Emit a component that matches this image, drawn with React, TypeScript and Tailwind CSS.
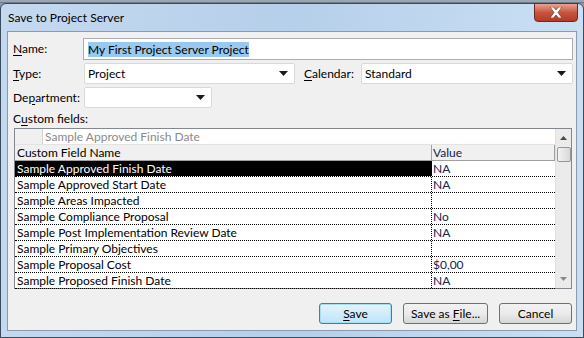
import React from "react";

const rows: { name: string; value: string }[] = [
  { name: "Sample Approved Finish Date", value: "NA" },
  { name: "Sample Approved Start Date", value: "NA" },
  { name: "Sample Areas Impacted", value: "" },
  { name: "Sample Compliance Proposal", value: "No" },
  { name: "Sample Post Implementation Review Date", value: "NA" },
  { name: "Sample Primary Objectives", value: "" },
  { name: "Sample Proposal Cost", value: "$0,00" },
  { name: "Sample Proposed Finish Date", value: "NA" },
];

function Arrow() {
  return (
    <svg width="9" height="5" viewBox="0 0 9 5" className="shrink-0">
      <path d="M0 0 H9 L4.5 5 Z" fill="#1a1a1a" />
    </svg>
  );
}

function Combo({ w, text }: { w: string; text?: string }) {
  return (
    <div
      className={`${w} h-[21px] flex items-center bg-white border border-[#d9d9d9] rounded-[2px] pl-[3px] pr-[6px]`}
    >
      <span className="flex-1 leading-none">{text}</span>
      <Arrow />
    </div>
  );
}

export default function App() {
  return (
    <div className="w-[584px] h-[338px] overflow-hidden bg-[#8c98a6] flex flex-col font-['Lato','Noto_Sans',sans-serif] text-[12px] text-black">
      <div className="h-[3px] bg-[#9aa5b2] border-b border-[#707c8a]" />
      <div className="relative flex-1 flex flex-col border border-[#3b4b5e] rounded-t-[6px] bg-gradient-to-r from-[#c4d9f0] via-[#b6cfea] to-[#c9dff4]">
        <div className="h-[27px] flex items-center pl-[7px] text-[12px] text-black">
          Save to Project Server
        </div>
        <div className="absolute right-[5px] top-[-1px] w-[44px] h-[19px] rounded-b-[4px] border border-[#6b2a22] bg-gradient-to-b from-[#e5a394] via-[#c9543d] to-[#b53a26] flex items-center justify-center">
          <svg width="14" height="11" viewBox="0 0 14 11">
            <path
              d="M1 0 H4.5 L7 3 L9.5 0 H13 L9 5.5 L13 11 H9.5 L7 8 L4.5 11 H1 L5 5.5 Z"
              fill="#ffffff"
              stroke="#5b2a24"
              strokeWidth="0.6"
            />
          </svg>
        </div>
        <div className="mx-[6px] h-[300px] border border-[#8a9bb0] bg-[#f0f0f0] flex flex-col pl-[5px] pr-[3px] pt-[6px]">
          {/* Name */}
          <div className="flex items-center h-[22px]">
            <div className="w-[70px]">
              <span className="underline underline-offset-2">N</span>ame:
            </div>
            <div className="flex-1 h-[22px] bg-white border border-[#abadb3] flex items-center pl-[4px]">
              <span className="bg-[#99c9ef] leading-[15px]">My First Project Server Project</span>
            </div>
          </div>
          {/* Type / Calendar */}
          <div className="flex items-center h-[21px] mt-[3px]">
            <div className="w-[71px]">
              <span className="underline underline-offset-2">T</span>ype:
            </div>
            <Combo w="w-[211px]" text="Project" />
            <div className="w-[57px] ml-[9px]">
              <span className="underline underline-offset-2">C</span>alendar:
            </div>
            <Combo w="flex-1" text="Standard" />
          </div>
          {/* Department */}
          <div className="flex items-center h-[21px] mt-[3px]">
            <div className="w-[71px]">
              De<span className="underline underline-offset-2">p</span>artment:
            </div>
            <Combo w="w-[128px]" />
          </div>
          {/* Custom fields */}
          <div className="h-[14px] mt-[4px] flex items-center">
            C<span className="underline underline-offset-2">u</span>stom fields:
          </div>
          {/* Grid */}
          <div className="mt-[2px] ml-[1px] mr-[1px] h-[161px] flex border border-[#828790] bg-white">
            <div className="flex-1 flex flex-col">
              <div className="h-[16px] flex border-b border-[#e3e3e3]">
                <div className="w-[28px] bg-[#f0f0f0] border-r border-[#d5d5d5]" />
                <div className="pl-[2px] text-[#8a8a8a] flex items-center">Sample Approved Finish Date</div>
              </div>
              <div className="h-[16px] flex bg-[#f0f0f0] border-b border-[#a0a0a0] border-r">
                <div className="w-[417px] pl-[2px] border-r border-[#a0a0a0] flex items-center">Custom Field Name</div>
                <div className="flex-1 pl-[1px] flex items-center text-[#14214f]">Value</div>
              </div>
              {rows.map((r, i) => (
                <div key={r.name} className="h-[16px] flex border-b border-dotted border-black">
                  <div
                    className={`w-[417px] pl-[2px] flex items-center border-r border-dotted border-black ${
                      i === 0 ? "bg-black text-white" : ""
                    }`}
                  >
                    {r.name}
                  </div>
                  <div className="flex-1 pl-[1px] flex items-center text-[#14214f]">{r.value}</div>
                </div>
              ))}
            </div>
            <div className="w-[16px] bg-[#ebebeb] border-l border-[#e0e0e0] flex flex-col items-center">
              <div className="h-[18px] flex items-center justify-center">
                <svg width="7" height="4" viewBox="0 0 7 4">
                  <path d="M0 4 L3.5 0 L7 4 Z" fill="#4a4a4a" />
                </svg>
              </div>
              <div className="w-[14px] h-[15px] rounded-[2px] border border-[#979797] bg-gradient-to-r from-[#f3f3f3] to-[#d8d8d8]" />
              <div className="flex-1" />
              <div className="h-[18px] flex items-center justify-center">
                <svg width="7" height="4" viewBox="0 0 7 4">
                  <path d="M0 0 L7 0 L3.5 4 Z" fill="#8a8a8a" />
                </svg>
              </div>
            </div>
          </div>
          {/* Buttons */}
          <div className="flex justify-end mt-[14px] mr-[1px] gap-[11px]">
            <div className="w-[73px] h-[21px] rounded-[3px] border border-[#3c7fb1] bg-gradient-to-b from-[#e5f4fc] to-[#bde4f8] shadow-[inset_0_0_0_1px_#a8def8] flex items-center justify-center">
              <span>
                <span className="underline underline-offset-2">S</span>ave
              </span>
            </div>
            <div className="w-[85px] h-[21px] rounded-[3px] border border-[#707070] bg-gradient-to-b from-[#f2f2f2] via-[#ebebeb] to-[#d6d6d6] flex items-center justify-center">
              <span>
                Save as <span className="underline underline-offset-2">F</span>ile...
              </span>
            </div>
            <div className="w-[73px] h-[21px] rounded-[3px] border border-[#707070] bg-gradient-to-b from-[#f2f2f2] via-[#ebebeb] to-[#d6d6d6] flex items-center justify-center">
              Cancel
            </div>
          </div>
        </div>
      </div>
    </div>
  );
}
